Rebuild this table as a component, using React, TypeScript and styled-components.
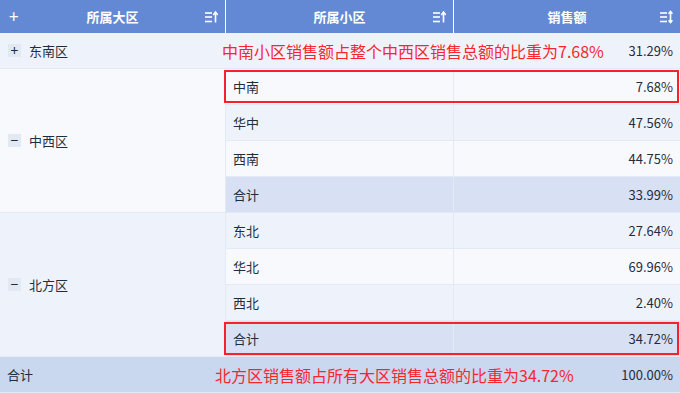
import React from "react";
import styled, { createGlobalStyle } from "styled-components";

const Global = createGlobalStyle`
  html, body { margin: 0; padding: 0; background: #ffffff; }
  body { font-family: "Noto Sans CJK SC", "Noto Sans", sans-serif; }
`;

const Table = styled.div`
  width: 680px;
  height: 393px;
  display: grid;
  grid-template-columns: 226px 228px 226px;
  grid-template-rows: 33px repeat(10, 36px);
  font-size: 13px;
  color: #1f2d3d;
  overflow: hidden;
`;

const HeadCell = styled.div<{ $col: number; $last?: boolean }>`
  grid-row: 1;
  grid-column: ${(p) => p.$col};
  background: #6489d4;
  color: #ffffff;
  font-weight: 700;
  display: flex;
  align-items: center;
  justify-content: center;
  position: relative;
  border-right: ${(p) => (p.$last ? "none" : "1px solid #ffffff")};
  box-sizing: border-box;
`;

const HeadPlus = styled.span`
  position: absolute;
  left: 9px;
  top: 7px;
  font-size: 17px;
  font-weight: 400;
  line-height: 17px;
`;

const SortIcon = styled.svg`
  position: absolute;
  right: 7px;
  top: 10px;
`;

const Cell = styled.div<{
  $bg: string;
  $align?: "left" | "right";
  $row: string;
  $col: string;
  $divider?: boolean;
}>`
  grid-row: ${(p) => p.$row};
  grid-column: ${(p) => p.$col};
  background: ${(p) => p.$bg};
  display: flex;
  align-items: center;
  justify-content: ${(p) => (p.$align === "right" ? "flex-end" : "flex-start")};
  padding: 0 7px;
  box-sizing: border-box;
  border-bottom: 1px solid #e4eaf4;
  border-right: ${(p) => (p.$divider ? "1px solid #e4eaf4" : "none")};
  white-space: nowrap;
`;

const Toggle = styled.span`
  display: inline-flex;
  align-items: center;
  justify-content: center;
  width: 13px;
  height: 13px;
  background: #e3e9f2;
  color: #1f2d3d;
  font-size: 14px;
  line-height: 13px;
  margin: 0 8px 0 1px;
`;

const Highlight = styled.div<{ $row: number }>`
  grid-column: 2 / 4;
  grid-row: ${(p) => p.$row};
  margin: 1px 1px 2px -2px;
  border: 2px solid #f5222d;
  pointer-events: none;
  z-index: 2;
`;

const Note = styled.div<{ $row: number; $col: string; $shift: number }>`
  grid-column: ${(p) => p.$col};
  grid-row: ${(p) => p.$row};
  display: flex;
  align-items: center;
  margin-left: ${(p) => p.$shift}px;
  color: #f7262e;
  font-size: 16px;
  white-space: nowrap;
  z-index: 3;
  pointer-events: none;
`;

const SortUp = () => (
  <SortIcon width="14" height="14" viewBox="0 0 14 14" fill="none" stroke="#fff" strokeWidth="1.6">
    <line x1="1" y1="3" x2="8" y2="3" />
    <line x1="1" y1="7" x2="8" y2="7" />
    <line x1="1" y1="11.5" x2="8" y2="11.5" />
    <line x1="11.5" y1="2.5" x2="11.5" y2="12.5" />
    <path d="M9.3 5 L11.5 2 L13.7 5" />
  </SortIcon>
);

const SortBoth = () => (
  <SortIcon width="14" height="14" viewBox="0 0 14 14" fill="none" stroke="#fff" strokeWidth="1.6">
    <line x1="1" y1="3" x2="8" y2="3" />
    <line x1="1" y1="7" x2="8" y2="7" />
    <line x1="1" y1="11.5" x2="8" y2="11.5" />
    <line x1="11.5" y1="1.5" x2="11.5" y2="12.5" />
    <path d="M9.6 3.8 L11.5 1.5 L13.4 3.8" />
    <path d="M9.6 10.2 L11.5 12.5 L13.4 10.2" />
  </SortIcon>
);

const LIGHT = "#f7f9fd";
const BLUE = "#eef3fb";
const SUB = "#d8e1f3";
const TOTAL = "#c9d7ef";

type Row = { name: string; value: string; bg: string };

const central: Row[] = [
  { name: "中南", value: "7.68%", bg: LIGHT },
  { name: "华中", value: "47.56%", bg: BLUE },
  { name: "西南", value: "44.75%", bg: LIGHT },
  { name: "合计", value: "33.99%", bg: SUB },
];

const north: Row[] = [
  { name: "东北", value: "27.64%", bg: BLUE },
  { name: "华北", value: "69.96%", bg: LIGHT },
  { name: "西北", value: "2.40%", bg: BLUE },
  { name: "合计", value: "34.72%", bg: SUB },
];

const SubRows = ({ rows, start }: { rows: Row[]; start: number }) => (
  <>
    {rows.map((r, i) => (
      <React.Fragment key={i}>
        <Cell $bg={r.bg} $divider $row={`${start + i}`} $col="2">{r.name}</Cell>
        <Cell $bg={r.bg} $align="right" $row={`${start + i}`} $col="3">{r.value}</Cell>
      </React.Fragment>
    ))}
  </>
);

export default function App() {
  return (
    <>
      <Global />
      <Table>
        <HeadCell $col={1}>
          <HeadPlus>+</HeadPlus>
          所属大区
          <SortUp />
        </HeadCell>
        <HeadCell $col={2}>
          所属小区
          <SortUp />
        </HeadCell>
        <HeadCell $col={3} $last>
          销售额
          <SortBoth />
        </HeadCell>

        <Cell $bg={BLUE} $row="2" $col="1 / 3">
          <Toggle>+</Toggle>东南区
        </Cell>
        <Cell $bg={BLUE} $align="right" $row="2" $col="3">31.29%</Cell>

        <Cell $bg={LIGHT} $row="3 / 7" $divider $col="1">
          <Toggle>−</Toggle>中西区
        </Cell>
        <SubRows rows={central} start={3} />

        <Cell $bg={BLUE} $row="7 / 11" $divider $col="1">
          <Toggle>−</Toggle>北方区
        </Cell>
        <SubRows rows={north} start={7} />

        <Cell $bg={TOTAL} $row="11" $col="1 / 3">合计</Cell>
        <Cell $bg={TOTAL} $align="right" $row="11" $col="3">100.00%</Cell>

        <Highlight $row={3} />
        <Highlight $row={10} />
        <Note $row={2} $col="2 / 4" $shift={-4}>中南小区销售额占整个中西区销售总额的比重为7.68%</Note>
        <Note $row={11} $col="1 / 4" $shift={215}>北方区销售额占所有大区销售总额的比重为34.72%</Note>
      </Table>
    </>
  );
}
